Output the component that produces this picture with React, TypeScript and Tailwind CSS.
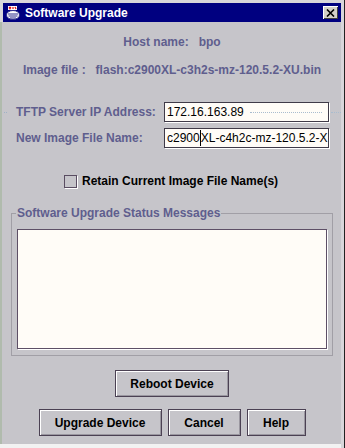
import React from "react"

const label = "text-[12px] font-bold text-[#5f5e8e] leading-4"
const btn =
  "h-[27px] border border-[#4b4153] bg-[#c6c5ca] text-[12px] font-bold text-black shadow-[inset_1px_1px_0_#ffffff,inset_-1px_-1px_0_#9a97a0]"

function AppIcon() {
  return (
    <svg width="16" height="16" viewBox="0 0 16 16">
      <path d="M3 1h9v4H3z" fill="#fff" />
      <path d="M4 2l2 2M6 2l-2 2M8 2v2M10 2l1 2" stroke="#e01010" strokeWidth="1.2" />
      <ellipse cx="8" cy="10" rx="6.5" ry="4.5" fill="#fff" stroke="#2a2a8a" />
      <path d="M3 9h10M3.5 11h9M5 13h6" stroke="#2a2a8a" />
    </svg>
  )
}

function CloseBox() {
  return (
    <div className="w-[15px] h-[13px] bg-[#d4d0c8] flex items-center justify-center shadow-[inset_1px_1px_0_#ffffff,inset_-1px_-1px_0_#404040]">
      <svg width="9" height="8" viewBox="0 0 9 8">
        <path d="M1 0.5l7 7M8 0.5l-7 7" stroke="#000" strokeWidth="1.6" />
      </svg>
    </div>
  )
}

function Field({ children }: { children: React.ReactNode }) {
  return (
    <div className="w-[165px] h-[20px] bg-[#fffcf7] border border-[#3f3a48] shadow-[1px_1px_0_#ffffff] flex items-center pl-[2px] overflow-hidden whitespace-nowrap text-[12px] text-black leading-4">
      {children}
    </div>
  )
}

export default function App() {
  return (
    <div
      className="w-[345px] h-[448px] bg-[#d8d6da] flex flex-col overflow-hidden"
      style={{ fontFamily: '"Liberation Sans", Arial, sans-serif' }}
    >
      <div className="flex flex-1 flex-col pt-[3px] pl-[3px] pr-[3px] border-r border-[#222] border-l-0">
        <div className="h-[19px] bg-[#000080] flex items-center pl-[2px] pr-[3px] gap-[4px]">
          <AppIcon />
          <span className="text-white text-[12px] font-bold flex-1 leading-4">Software Upgrade</span>
          <CloseBox />
        </div>
        <div className="flex-1 bg-[#c6c5ca] flex flex-col border-l-[2px] border-[#b0bbad] -ml-[3px] pl-[1px] mr-0">
          <div className={`${label} text-center mt-[12px]`}>Host name:&nbsp;&nbsp; bpo</div>
          <div className={`${label} text-center mt-[12px]`}>Image file :&nbsp;&nbsp; flash:c2900XL-c3h2s-mz-120.5.2-XU.bin</div>

          <div className="flex items-center mt-[24px] h-[20px]">
            <span className="w-[3px] h-px border-t border-dotted border-[#9fb2c6] ml-[1px] mr-[9px]" />
            <span className={`${label} w-[148px]`}>TFTP Server IP Address:</span>
            <Field>
              <span>172.16.163.89</span>
              <span className="flex-1 mx-[6px] border-t border-dotted border-[#a9bccf]" />
            </Field>
            <span className="flex-1 ml-[2px] border-t border-dotted border-[#a9bccf]" />
          </div>

          <div className="flex items-center mt-[6px] h-[20px]">
            <span className={`${label} w-[148px] ml-[13px]`}>New Image File Name:</span>
            <Field>
              <span>c2900</span>
              <span className="w-px h-[16px] bg-black" />
              <span>XL-c4h2c-mz-120.5.2-X</span>
            </Field>
          </div>

          <div className="flex items-center mt-[25px] ml-[61px] gap-[5px] h-[16px]">
            <span className="w-[13px] h-[13px] border border-[#5a4d62] shadow-[1px_1px_0_#ffffff]" />
            <span className="text-[12px] font-bold text-black leading-4">Retain Current Image File Name(s)</span>
          </div>

          <fieldset className="mx-[8px] mt-[16px] border border-[#a19fa6] px-[5px] pb-[6px]">
            <legend className={`${label} px-px -ml-px`}>Software Upgrade Status Messages</legend>
            <div className="mt-[8px] h-[120px] bg-[#fffcf7] border border-[#5d4f66] shadow-[1px_1px_0_#ffffff]" />
          </fieldset>

          <div className="flex justify-center mt-[14px]">
            <button type="button" className={`${btn} w-[114px]`}>Reboot Device</button>
          </div>
          <div className="flex justify-center gap-[6px] mt-[12px]">
            <button type="button" className={`${btn} w-[123px]`}>Upgrade Device</button>
            <button type="button" className={`${btn} w-[73px]`}>Cancel</button>
            <button type="button" className={`${btn} w-[59px]`}>Help</button>
          </div>
        </div>
        <div className="h-[4px] bg-[#f2f2f2] -ml-[3px]" />
      </div>
    </div>
  )
}
